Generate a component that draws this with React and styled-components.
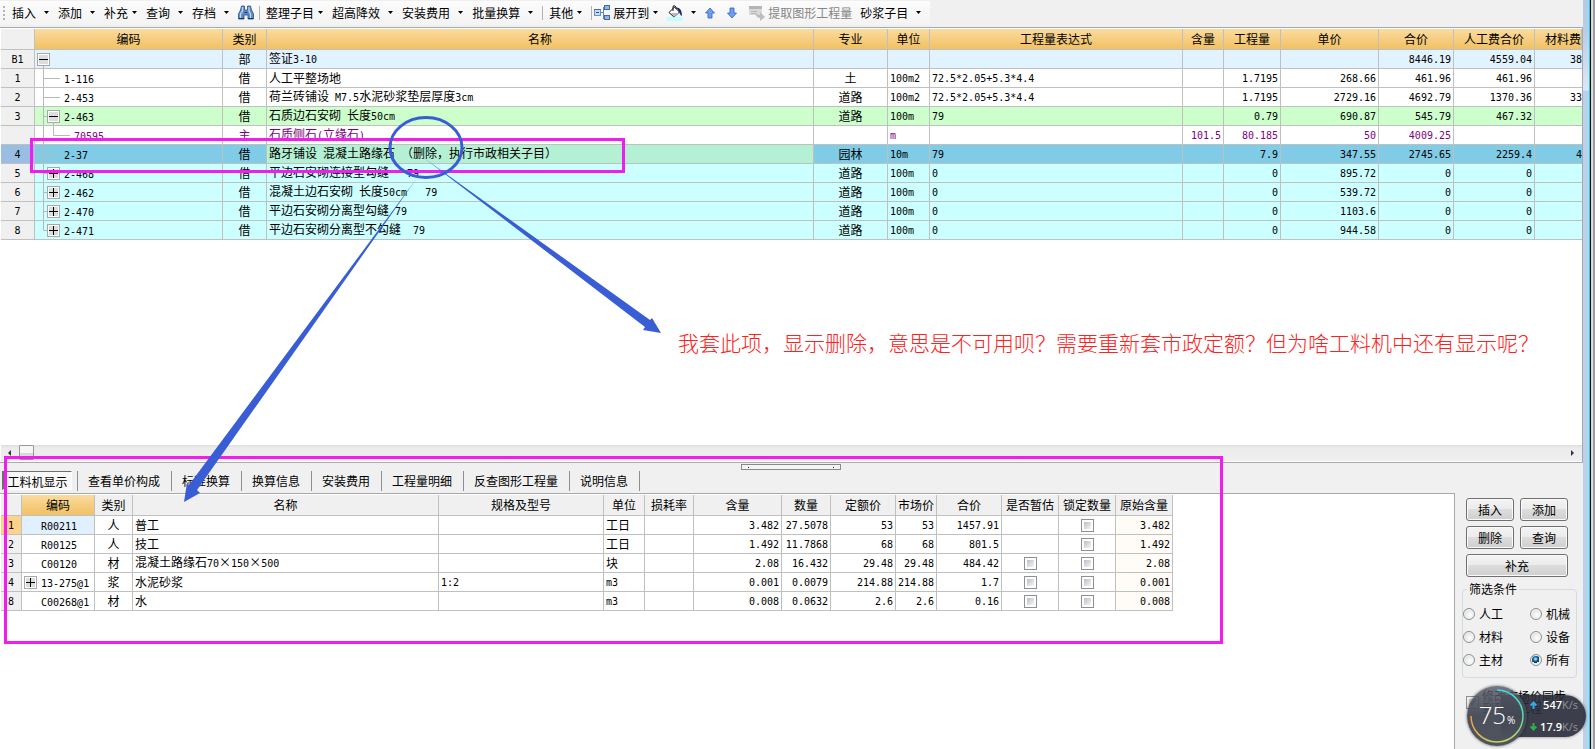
import React from "react";
import styled, { createGlobalStyle, css } from "styled-components";

const GlobalStyle = createGlobalStyle`
  * { box-sizing: border-box; }
  body {
    margin: 0;
    overflow: hidden;
    background: #f0f0f0;
    color: #000;
    font: 12px/16px "Noto Sans CJK SC", "Liberation Sans", sans-serif;
  }
  button, input { font: inherit; color: inherit; margin: 0; }
`;

const GRID = "#c0c0c0";
const EDGE = "#a9a9ad";
const PINK = "#f41bf0";
const BLUE = "#385dd4";

/* ---------- window frame ---------- */

const Screen = styled.div`
  position: relative;
  display: flex;
  height: 100vh;
`;

const Workspace = styled.main`
  flex: 1;
  min-width: 0;
  display: flex;
  flex-direction: column;
`;

const FrameBlue = styled.div`
  width: 6px;
  background: linear-gradient(#b2cae4 0, #b7cee7 30px, #dce8f5 90px, #b9d1ea 91px);
`;

const FrameDark = styled.div`
  width: 2px;
  background: #0c0f12;
  border-left: 1px solid #31c8ee;
`;

const FrameGray = styled.div`
  width: 4px;
  background: linear-gradient(90deg, #d2d2d2, #e9e9e9 60%, #9c9c9c 60%);
`;

/* ---------- toolbar ---------- */

const Toolbar = styled.header`
  height: 28px;
  padding-top: 1px;
  border-bottom: 1px solid ${EDGE};
  display: flex;
`;

const Strip = styled.div`
  height: 24px;
  padding: 0 0 0 3px;
  display: flex;
  align-items: center;
  background: linear-gradient(#fcfcfc, #f3f3f3);
`;

const Grip = styled.span`
  width: 2px;
  height: 15px;
  margin-right: 7px;
  background: repeating-linear-gradient(#b5b5b5 0 2px, transparent 2px 4px);
`;

const Tool = styled.button`
  display: flex;
  align-items: center;
  gap: ${(p) => (p.$tight ? 3 : 7)}px;
  height: 22px;
  margin-right: 4px;
  padding: 0 ${(p) => (p.$plain ? 1 : 4)}px 0 0;
  border: 0;
  background: none;
  white-space: nowrap;
  &:disabled { color: #858585; }
`;

const ToolText = styled.span`
  display: flex;
  align-items: center;
  gap: 3px;
`;

const Divider = styled.span`
  width: 1px;
  height: 14px;
  margin-right: ${(p) => (p.$near ? 2 : 6)}px;
  background: #b4b4b4;
`;

const Caret = () => (
  <svg width="7" height="4" viewBox="0 0 7 4" aria-hidden="true">
    <path d="M1 0h5L3.500 3z" />
  </svg>
);

const Binoculars = () => (
  <svg width="16" height="16" viewBox="0 0 16 16">
    <path d="M3.500 1h3v4h3V1h3l1 4 2 4v5H10v-4H6v4H.5V9l2-4z" fill="#5f8ac8" stroke="#284f8e" strokeWidth=".8" />
    <path d="M4.500 2v4L2.500 9v4M11 2v4l1.500 3v4" fill="none" stroke="#c3daf5" strokeWidth="1.200" />
    <path d="M1 13.500h5M10 13.500h5M6.500 7.500h3" stroke="#15386e" />
  </svg>
);

const ExpandIcon = () => (
  <svg width="16" height="16" viewBox="0 0 16 16">
    <path d="M6 7.500h4M9.500 2.500v11M9 2.500h3M9 13.500h3" fill="none" stroke="#5f86bd" />
    <rect x=".5" y="4.500" width="6" height="6" fill="#c9dcf3" stroke="#6b8fc4" />
    <path d="M0 4.500h7" stroke="#4470b0" />
    <path d="M2 7.500h3" stroke="#244f94" />
    <g fill="#8fb6e6" stroke="#3f6bab">
      <rect x="10.500" y=".5" width="5" height="4" />
      <rect x="10.500" y="10.500" width="5" height="4" />
    </g>
  </svg>
);

const PaintIcon = () => (
  <svg width="16" height="16" viewBox="0 0 16 16">
    <rect y="12" width="16" height="4" fill="#c5fcff" />
    <path d="M2 7.500 7.500 2l5 5L7 12z" fill="#fff" stroke="#111" />
    <path d="M4 8h8l-5 4z" fill="#b9b9c4" />
    <path d="M6 6V2q0-2 2-1t1 3" fill="none" stroke="#111" />
    <path d="M9.500 2.500q5.500 0 5.500 8.500-2-1-3-4z" fill="#1c2a7c" />
  </svg>
);

const ArrowIcon = ({ down }) => (
  <svg width="10" height="12" viewBox="0 0 10 12">
    <path
      d={down ? "M3 1h4v5h2.500L5 11 .5 6H3z" : "M3 11h4V6h2.500L5 1 .5 6H3z"}
      fill="#6f9fee"
      stroke="#2b5fc4"
      strokeWidth=".8"
    />
  </svg>
);

const ExtractIcon = () => (
  <svg width="16" height="16" viewBox="0 0 16 16">
    <path d="M0 1h13v9H0z" fill="#d9d9d9" />
    <path d="M0 1h13v3H0z" fill="#b5b5b5" />
    <path d="M2 6.500h6M2 8.500h4" stroke="#b9b9b9" />
    <path d="M6 6q1 4 5 4V7l5 5-5 4v-3q-5 0-5-7z" fill="#bdbdbd" />
  </svg>
);

const tools = [
  { label: "插入" }, { label: "添加" }, { label: "补充", tight: true }, { label: "查询" }, { label: "存档" },
  { icon: <Binoculars />, name: "查找", plain: true }, { divider: true },
  { label: "整理子目", tight: true }, { label: "超高降效" }, { label: "安装费用" }, { label: "批量换算" }, { divider: true },
  { label: "其他", tight: true }, { divider: true, near: true },
  { icon: <ExpandIcon />, label: "展开到", tight: true }, { icon: <PaintIcon />, name: "填充颜色" },
];

const TextTool = ({ t }) =>
  t.divider ? (
    <Divider $near={t.near} />
  ) : (
    <Tool $tight={t.tight} $plain={t.plain} aria-label={t.name}>
      <ToolText>{t.icon}{t.label}</ToolText>
      {!t.plain && <Caret />}
    </Tool>
  );

const IconTool = styled(Tool)`
  margin: 0;
  padding: 0 12px 0 0;
`;

/* ---------- tables ---------- */

const Latin = styled.span`
  font-family: "DejaVu Sans Mono", "Liberation Mono", monospace;
  font-size: 10px;
`;

const FullWidth = styled.span`
  display: inline-block;
  width: 12px;
  text-align: center;
`;

// Latin runs use the half-width fixed face; Chinese and the multiplication sign take a full cell.
const Mixed = ({ children }) =>
  String(children)
    .split(/([\x20-\x7e]+|×)/)
    .map((s, i) => (s === "×" ? <FullWidth key={i}>{s}</FullWidth> : i % 2 ? <Latin key={i}>{s}</Latin> : s));

const Table = styled.table`
  width: ${(p) => p.$width};
  table-layout: fixed;
  border-spacing: 0;
  flex: none;
`;

const HeadCell = styled.th`
  height: 21px;
  padding: 0;
  font-weight: 400;
  white-space: nowrap;
  overflow: hidden;
  text-align: ${(p) => p.$align || "center"};
  border: solid ${GRID};
  border-width: 0 1px 1px 0;
  background: ${(p) => (p.$gold ? "linear-gradient(#fbdb9f, #f1c163)" : "#f0f0f0")};
`;

const Cell = styled.td`
  height: 19px;
  padding: 0 2px;
  line-height: 16px;
  white-space: pre;
  overflow: hidden;
  text-align: ${(p) => p.$align || "left"};
  vertical-align: middle;
  border: solid ${GRID};
  border-width: 0 1px 1px 0;
  background: ${(p) => p.$bg || "transparent"};
  ${(p) => p.$flush && css`padding: 0; border-right: 0;`}
`;

const Row = styled.tr`
  background: ${(p) => p.$bg};
  color: ${(p) => p.$color || "#000"};
`;

const CodeWrap = styled.div`
  display: flex;
  align-items: center;
  height: 18px;
  margin-left: -2px;
`;

const CodeText = styled.span`
  padding-top: 2px;
`;

const Box = ({ x, y = 3, plus }) => (
  <g>
    <rect x={x + 0.5} y={y + 0.5} width="12" height="12" fill="#fff" stroke="#a8a8a8" />
    <rect x={x + 2} y={y + 2} width="9" height="9" fill="#dcdcdc" />
    <path d={`M${x + 2} ${y + 6.5}h9${plus ? `M${x + 6.5} ${y + 2}v9` : ""}`} stroke="#000" />
  </g>
);

const TreeGuide = ({ kind }) => {
  const child = kind === "child";
  return (
    <svg width={child ? 39 : 29} height="18" aria-hidden="true">
      <g stroke="#b8b8b8" fill="none">
        {kind === "root" && <path d="M8.500 16v2" />}
        {kind !== "root" && <path d={kind === "last" ? "M8.500 0v9.500H13" : "M8.500 0v18"} />}
        {kind === "leaf" && <path d="M8.500 9.500H25" />}
        {(kind === "plus" || kind === "minus") && <path d="M8.500 9.500H13" />}
        {kind === "minus" && <path d="M18.500 16v2" />}
        {child && <path d="M18.500 0v9.500H35" />}
      </g>
      {kind === "root" && <Box x={2} />}
      {kind === "minus" && <Box x={12} />}
      {(kind === "plus" || kind === "last") && <Box x={12} plus />}
    </svg>
  );
};

const topCols = [
  ["", 34], ["编码", 188], ["类别", 44], ["名称"], ["专业", 74], ["单位", 42], ["工程量表达式", 253],
  ["含量", 41], ["工程量", 57], ["单价", 98], ["合价", 75], ["人工费合价", 81], ["材料费", 47],
];
const topAlign = ["center", "left", "center", "left", "center", "left", "left", "right", "right", "right", "right", "right", "right"];

const topRows = [
  { bg: "#e1f3ff", tree: "root", c: ["B1", "", "部", "签证3-10", "", "", "", "", "", "", "8446.19", "4559.04", "38"] },
  { bg: "#fff", tree: "leaf", c: ["1", "1-116", "借", "人工平整场地", "土", "100m2", "72.5*2.05+5.3*4.4", "", "1.7195", "268.66", "461.96", "461.96", ""] },
  { bg: "#fff", tree: "leaf", c: ["2", "2-453", "借", "荷兰砖铺设 M7.5水泥砂浆垫层厚度3cm", "道路", "100m2", "72.5*2.05+5.3*4.4", "", "1.7195", "2729.16", "4692.79", "1370.36", "33"] },
  { bg: "#ccffcc", tree: "minus", c: ["3", "2-463", "借", "石质边石安砌 长度50cm", "道路", "100m", "79", "", "0.79", "690.87", "545.79", "467.32", ""] },
  { bg: "#fff", color: "#800080", tree: "child", c: ["", "70595", "主", "石质侧石(立缘石)", "", "m", "", "101.5", "80.185", "50", "4009.25", "", ""] },
  { bg: "#80cbe6", selected: true, tree: "leaf", c: ["4", "2-37", "借", "路牙铺设 混凝土路缘石 （删除，执行市政相关子目）", "园林", "10m", "79", "", "7.9", "347.55", "2745.65", "2259.4", "4"] },
  { bg: "#ccffff", tree: "plus", c: ["5", "2-468", "借", "平边石安砌连接型勾缝   79", "道路", "100m", "0", "", "0", "895.72", "0", "0", ""] },
  { bg: "#ccffff", tree: "plus", c: ["6", "2-462", "借", "混凝土边石安砌 长度50cm   79", "道路", "100m", "0", "", "0", "539.72", "0", "0", ""] },
  { bg: "#ccffff", tree: "plus", c: ["7", "2-470", "借", "平边石安砌分离型勾缝 79", "道路", "100m", "0", "", "0", "1103.6", "0", "0", ""] },
  { bg: "#ccffff", tree: "last", c: ["8", "2-471", "借", "平边石安砌分离型不勾缝  79", "道路", "100m", "0", "", "0", "944.58", "0", "0", ""] },
];

const topBg = (row, i) => {
  if (i === 0) return row.selected ? "#9abde3" : "#f0f0f0";
  if (i === 3 && row.selected) return "#b3f0d4";
  return undefined;
};

const TopPane = styled.section`
  flex: 1;
  min-height: 0;
  display: flex;
  flex-direction: column;
  background: #fff;
  padding: 1px 0 0 1px;
  border-right: 1px solid ${EDGE};
  border-bottom: 1px solid ${EDGE};
`;

const TopBody = styled.div`
  flex: 1;
  min-height: 0;
  overflow: hidden;
`;

const ScrollBar = styled.div`
  height: 16px;
  margin-bottom: 1px;
  display: flex;
  align-items: center;
  padding: 0 7px 1px 5px;
  background: linear-gradient(#dedede, #ececec 3px, #efefef);
`;

const Thumb = styled.span`
  width: 15px;
  height: 15px;
  margin: 0 auto 0 8px;
  border: 1px solid #979797;
  border-radius: 1px;
  background: linear-gradient(#f6f6f6 50%, #d6d6d6 50%, #e0e0e0);
`;

const ScrollArrow = ({ right }) => (
  <svg width="5" height="8" viewBox="0 0 5 8" aria-hidden="true">
    <path d={right ? "M1 1v6l3-3z" : "M5 1v6L2 4z"} fill="#333" />
  </svg>
);

/* ---------- detail pane ---------- */

const BottomPane = styled.section`
  position: relative;
  flex: 0 0 286px;
  display: flex;
  flex-direction: column;
`;

const Tabs = styled.nav`
  position: relative;
  height: 30px;
  padding: 8px 0 0 2px;
  display: flex;
  align-items: flex-start;
`;

const Tab = styled.button`
  height: 20px;
  padding: 0 11px 0 10px;
  border: 0;
  border-right: 1px solid #8e8e8e;
  background: none;
  white-space: nowrap;
  line-height: 18px;
`;

const ActiveTab = styled(Tab)`
  height: 19px;
  width: 70px;
  margin-right: 5px;
  padding: 1px 0 0;
  border: 1px solid #fff;
  border-top-color: #6e6e6e;
  border-left: 2px solid #6e6e6e;
  background: #f8f8f8;
`;

const TabEdge = styled.span`
  width: 1px;
  height: 20px;
  background: #8e8e8e;
`;

const Splitter = styled.span`
  position: absolute;
  left: 741px;
  top: 1px;
  width: 100px;
  height: 6px;
  border: 1px solid #8a8a8a;
  background:
    linear-gradient(#224, #224) 6px 2px / 1px 1px no-repeat,
    linear-gradient(#224, #224) 91px 2px / 1px 1px no-repeat,
    #f4f4f4;
`;

const DetailArea = styled.div`
  flex: 1;
  min-height: 0;
  display: flex;
`;

const DetailGrid = styled.div`
  flex: 1;
  min-width: 0;
  overflow: hidden;
  background: #fff;
  padding: 1px 0 0 1px;
  border-top: 1px solid ${EDGE};
  border-right: 1px solid ${EDGE};
`;

const CodeIndent = styled.span`
  flex: none;
  display: flex;
  width: 19px;
  padding-left: 2px;
`;

const Check = styled.input`
  appearance: none;
  display: block;
  width: 13px;
  height: 13px;
  margin: 0 auto;
  border: 1px solid #8e8f8f;
  background: linear-gradient(135deg, #b9bec8, #f6f6f6) content-box #f4f4f4;
  padding: 2px;
`;

const detailCols = [
  ["", 21], ["编码", 73], ["类别", 38], ["名称", 306], ["规格及型号", 165], ["单位", 41], ["损耗率", 49], ["含量", 88],
  ["数量", 49], ["定额价", 65], ["市场价", 41], ["合价", 65], ["是否暂估", 57], ["锁定数量", 57], ["原始含量", 57],
];
const detailAlign = ["center", "left", "center", "left", "left", "left", "right", "right", "right", "right", "right", "right", "center", "center", "right"];
const CHK = true;
const detailRows = [
  ["1", "R00211", "人", "普工", "", "工日", "", "3.482", "27.5078", "53", "53", "1457.91", "", CHK, "3.482"],
  ["2", "R00125", "人", "技工", "", "工日", "", "1.492", "11.7868", "68", "68", "801.5", "", CHK, "1.492"],
  ["3", "C00120", "材", "混凝土路缘石70×150×500", "", "块", "", "2.08", "16.432", "29.48", "29.48", "484.42", CHK, CHK, "2.08"],
  ["4", "13-275@1", "浆", "水泥砂浆", "1:2", "m3", "", "0.001", "0.0079", "214.88", "214.88", "1.7", CHK, CHK, "0.001"],
  ["8", "C00268@1", "材", "水", "", "m3", "", "0.008", "0.0632", "2.6", "2.6", "0.16", CHK, CHK, "0.008"],
];

const detailBg = (r, i) => {
  if (i === 0) return r === 0 ? "#fdd28a" : "#f0f0f0";
  if (i === 1 && r === 0) return "#e0f0ff";
  if (i === 14) return "#fffbf6";
  return undefined;
};

const Side = styled.aside`
  width: 128px;
  padding: 5px 6px 0 7px;
`;

const ButtonGrid = styled.div`
  display: grid;
  grid-template-columns: 48px 48px;
  gap: 5px 6px;
  margin-left: 4px;
`;

const PushButton = styled.button`
  height: 23px;
  padding: 0;
  grid-column: ${(p) => (p.$wide ? "span 2" : "auto")};
  border: 1px solid #707070;
  border-radius: 3px;
  box-shadow: inset 0 0 0 1px #fafafa;
  background: linear-gradient(#f3f3f3, #ebebeb 50%, #dddddd 50%, #cfcfcf);
  line-height: 16px;
`;

const Filter = styled.fieldset`
  margin: 4px 0 0;
  padding: 5px 0 6px;
  min-width: 0;
  border: 1px solid #d0dbe4;
  border-radius: 4px;
  display: grid;
  grid-template-columns: 67px 1fr;
`;

const Legend = styled.legend`
  margin-left: 4px;
  padding: 0 2px;
  line-height: 16px;
`;

const RadioLabel = styled.label`
  display: flex;
  align-items: center;
  gap: 4px;
  height: 23px;
`;

const Radio = styled.input`
  appearance: none;
  width: 12px;
  height: 12px;
  border: 1px solid #8e8f8f;
  border-radius: 50%;
  background: radial-gradient(circle at 60% 60%, #fff, #d3d3d3);
  box-shadow: inset 0 0 0 1px #f4f4f4;
  &:checked {
    background: radial-gradient(circle at 45% 40%, #7fdcff 0 1px, #1c6ea6 2px, #0d2c4c 4px, #e8e8e8 4px);
  }
`;

const SyncLabel = styled.label`
  display: flex;
  gap: 3px;
  margin: 12px 0 0 4px;
  line-height: 12px;
  white-space: nowrap;
`;

const SyncCheck = styled(Check)`
  margin: 6px 0 0;
  flex: none;
  &:checked::before {
    content: "✓";
    display: block;
    font: 700 11px/8px "DejaVu Sans", sans-serif;
    color: #1d2f86;
  }
`;

/* ---------- floating network meter ---------- */

const Meter = styled.div`
  position: absolute;
  right: 9px;
  bottom: 3px;
  width: 119px;
  height: 61px;
  display: flex;
  align-items: center;
  color: #fff;
`;

const Dial = styled.div`
  position: relative;
  flex: none;
  width: 60px;
  height: 60px;
  border-radius: 50%;
  background: linear-gradient(rgba(88, 92, 106, 0.82), rgba(68, 72, 84, 0.95) 50%, #50545f);
  box-shadow: 0 0 3px rgba(0, 0, 0, 0.6);
  display: flex;
  align-items: baseline;
  justify-content: center;
  gap: 1px;
  font: 300 24px/58px "Open Sans", sans-serif;
`;

const Percent = styled.small`
  font: 400 10px/12px "Open Sans", sans-serif;
`;

const Ring = styled.svg`
  position: absolute;
  inset: 0;
`;

const Speeds = styled.div`
  flex: 1;
  height: 42px;
  margin-left: -26px;
  padding: 0 8px 0 29px;
  border-radius: 0 21px 21px 0;
  background: rgba(40, 43, 56, 0.9);
  box-shadow: 0 0 3px rgba(0, 0, 0, 0.5);
  display: grid;
  grid-template-rows: 1fr 1fr;
`;

const Speed = styled.div`
  display: flex;
  align-items: center;
  justify-content: space-between;
  font: 600 11px/20px "Open Sans", sans-serif;
  border-top: ${(p) => (p.$second ? "1px solid #3c3f4b" : "0")};
`;

const Unit = styled.span`
  color: #8f929b;
  font-weight: 400;
`;

const SpeedArrow = ({ down }) => (
  <svg width="7" height="8" viewBox="0 0 7 8" aria-hidden="true">
    <path
      d={down ? "M3.500 0v6M.7 3.500l2.800 3 2.800-3" : "M3.500 8V2M.7 4.500l2.800-3 2.800 3"}
      fill="none"
      stroke={down ? "#2fb04a" : "#38a8ea"}
      strokeWidth="2"
    />
  </svg>
);

/* ---------- markup drawn over the window ---------- */

const Drawing = styled.svg`
  position: absolute;
  left: 0;
  top: 0;
  pointer-events: none;
`;

const Mark = styled.div`
  position: absolute;
  left: ${(p) => p.$x}px;
  top: ${(p) => p.$y}px;
  width: ${(p) => p.$w}px;
  height: ${(p) => p.$h}px;
  border: 3px solid ${PINK};
  pointer-events: none;
`;

const Remark = styled.p`
  position: absolute;
  left: 678px;
  top: 327px;
  margin: 0;
  color: #ff2020;
  font: 300 21px/30px "Noto Sans CJK SC", sans-serif;
  white-space: nowrap;
`;

const Cols = ({ cols }) => (
  <colgroup>
    {cols.map(([, w], i) => <col key={i} width={w} />)}
  </colgroup>
);

const MainTable = () => (
  <Table $width="100%">
    <Cols cols={topCols} />
    <thead>
      <tr>
        {topCols.map(([t], i) => (
          <HeadCell key={i} $gold={i > 0} $align={i === 12 ? "right" : "center"}>{t}</HeadCell>
        ))}
      </tr>
    </thead>
    <tbody>
      {topRows.map((row, r) => (
        <Row key={r} $bg={row.bg} $color={row.color}>
          {row.c.map((v, i) => (
            <Cell key={i} $align={topAlign[i]} $bg={topBg(row, i)} $flush={i === 12}>
              {i === 1 ? (
                <CodeWrap><TreeGuide kind={row.tree} /><CodeText><Mixed>{v}</Mixed></CodeText></CodeWrap>
              ) : (
                <Mixed>{v}</Mixed>
              )}
            </Cell>
          ))}
        </Row>
      ))}
    </tbody>
  </Table>
);

const DetailTable = () => (
  <Table $width="1172px">
    <Cols cols={detailCols} />
    <thead>
      <tr>
        {detailCols.map(([t], i) => <HeadCell key={i} $gold={i === 1}>{t}</HeadCell>)}
      </tr>
    </thead>
    <tbody>
      {detailRows.map((row, r) => (
        <Row key={r} $bg="#fff">
          {row.map((v, i) => (
            <Cell key={i} $align={detailAlign[i]} $bg={detailBg(r, i)}>
              {v === CHK ? (
                <Check type="checkbox" aria-label={`${detailCols[i][0]} ${row[1]}`} />
              ) : i === 1 ? (
                <CodeWrap>
                  <CodeIndent>
                    {r === 3 && <svg width="13" height="13"><Box x={0} y={0} plus /></svg>}
                  </CodeIndent>
                  <CodeText><Mixed>{v}</Mixed></CodeText>
                </CodeWrap>
              ) : (
                <Mixed>{v}</Mixed>
              )}
            </Cell>
          ))}
        </Row>
      ))}
    </tbody>
  </Table>
);

export default function App() {
  return (
    <Screen>
      <GlobalStyle />
      <Workspace>
        <Toolbar>
          <Strip>
            <Grip />
            {tools.map((t, i) => <TextTool key={i} t={t} />)}
            <IconTool aria-label="上移"><ArrowIcon /></IconTool>
            <IconTool aria-label="下移"><ArrowIcon down /></IconTool>
            <Tool disabled><ToolText><ExtractIcon />提取图形工程量</ToolText></Tool>
            <TextTool t={{ label: "砂浆子目" }} />
          </Strip>
        </Toolbar>

        <TopPane>
          <TopBody><MainTable /></TopBody>
          <ScrollBar>
            <ScrollArrow />
            <Thumb />
            <ScrollArrow right />
          </ScrollBar>
        </TopPane>

        <BottomPane>
          <Tabs>
            <ActiveTab>工料机显示</ActiveTab>
            <TabEdge />
            {["查看单价构成", "标准换算", "换算信息", "安装费用", "工程量明细", "反查图形工程量", "说明信息"].map((t) => (
              <Tab key={t}>{t}</Tab>
            ))}
            <Splitter />
          </Tabs>
          <DetailArea>
            <DetailGrid><DetailTable /></DetailGrid>
            <Side>
              <ButtonGrid>
                <PushButton>插入</PushButton>
                <PushButton>添加</PushButton>
                <PushButton>删除</PushButton>
                <PushButton>查询</PushButton>
                <PushButton $wide>补充</PushButton>
              </ButtonGrid>
              <Filter>
                <Legend>筛选条件</Legend>
                {["人工", "机械", "材料", "设备", "主材", "所有"].map((t) => (
                  <RadioLabel key={t}>
                    <Radio type="radio" name="filter" defaultChecked={t === "所有"} />
                    {t}
                  </RadioLabel>
                ))}
              </Filter>
              <SyncLabel>
                <SyncCheck type="checkbox" defaultChecked />
                <span>修改市场价同步<br />到整个工程</span>
              </SyncLabel>
            </Side>
          </DetailArea>
          <Mark $x={4} $y={-7} $w={1219} $h={188} />
        </BottomPane>
      </Workspace>
      <FrameBlue />
      <FrameDark />
      <FrameGray />

      <Mark $x={30} $y={138} $w={595} $h={35} />
      <Drawing width="700" height="520" viewBox="0 0 700 520">
        <ellipse cx="426" cy="147.500" rx="36" ry="30" fill="none" stroke={BLUE} strokeWidth="3" />
        <path d="M417 178 189 485l-2-2-3 19 16-9-3-3z" fill={BLUE} />
        <path d="M424 158 650 320l2-2 9 15-18-3 2-3z" fill={BLUE} />
      </Drawing>
      <Remark>我套此项，显示删除，意思是不可用呗？需要重新套市政定额？但为啥工料机中还有显示呢？</Remark>

      <Meter>
        <Dial>
          75<Percent>%</Percent>
          <Ring width="60" height="60" viewBox="0 0 60 60" fill="none" strokeWidth="1.500">
            <defs>
              <linearGradient id="ringRight" x1="0" y1="0" x2="0" y2="1">
                <stop offset="0" stopColor="#35dde0" />
                <stop offset=".5" stopColor="#56dca0" />
                <stop offset="1" stopColor="#c5d75c" />
              </linearGradient>
              <linearGradient id="ringLeft" x1="1" y1="1" x2="0" y2="0">
                <stop offset="0" stopColor="#c5d75c" />
                <stop offset="1" stopColor="#f59b42" />
              </linearGradient>
            </defs>
            <path d="M30 4a26 26 0 0 1 0 52" stroke="url(#ringRight)" />
            <path d="M30 56A26 26 0 0 1 4 30" stroke="url(#ringLeft)" />
          </Ring>
        </Dial>
        <Speeds>
          <Speed><SpeedArrow /><span>547<Unit>K/s</Unit></span></Speed>
          <Speed $second><SpeedArrow down /><span>17.9<Unit>K/s</Unit></span></Speed>
        </Speeds>
      </Meter>
    </Screen>
  );
}
